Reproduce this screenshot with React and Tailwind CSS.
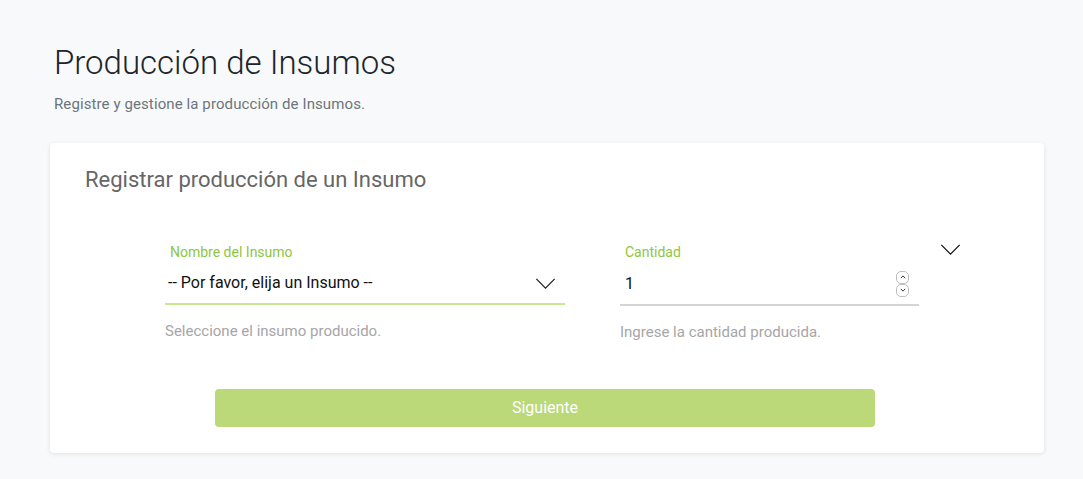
import React, { useState } from 'react';

const Chevron = ({ className }) => (
  <svg viewBox="0 0 22 12" className={className} fill="none" stroke="currentColor" strokeWidth="1.4">
    <path d="M1 1l10 10L21 1" />
  </svg>
);

const Spinner = () => (
  <div className="flex flex-col items-center gap-0">
    <div className="w-[13px] h-[13px] rounded-[5px] border border-[#bdbdbd] flex items-center justify-center">
      <svg viewBox="0 0 8 5" className="w-[6px] h-[4px]" fill="none" stroke="#333" strokeWidth="1.3">
        <path d="M1 4l3-3 3 3" />
      </svg>
    </div>
    <div className="w-[13px] h-[13px] rounded-[5px] border border-[#bdbdbd] flex items-center justify-center">
      <svg viewBox="0 0 8 5" className="w-[6px] h-[4px]" fill="none" stroke="#333" strokeWidth="1.3">
        <path d="M1 1l3 3 3-3" />
      </svg>
    </div>
  </div>
);

export default function App() {
  const [cantidad, setCantidad] = useState('1');

  return (
    <div className="min-h-screen bg-[#f8f9fa] pl-[50px] pr-[39px] pt-[40px] pb-[26px]" style={{ fontFamily: 'Roboto, sans-serif' }}>
      <div className="px-[4px]">
        <h1 className="text-[33px] leading-[46px] font-light text-[#212529]">
          Producción de Insumos
        </h1>
        <p className="mt-[8px] text-[15px] leading-[20px] tracking-[0.1px] text-[#6c757d]">
          Registre y gestione la producción de Insumos.
        </p>
      </div>

      <div className="mt-[29px] bg-white rounded-[4px] shadow-[0_1px_4px_rgba(0,0,0,0.1)] pt-[23px] pb-[26px]">
        <h2 className="pl-[35px] text-[22px] leading-[28px] text-[#666666]">
          Registrar producción de un Insumo
        </h2>

        <div className="mt-[49px] flex pl-[115px]">
          <div className="w-[400px]">
            <label className="block pl-[5px] text-[14px] leading-[18px] text-[#8dc63f]">Nombre del Insumo</label>
            <div className="mt-[2px] h-[42px] flex items-center justify-between pl-[3px] pr-[9px] border-b-2 border-[#c9e88d]">
              <span className="text-[16px] text-[#111]">-- Por favor, elija un Insumo --</span>
              <Chevron className="w-[21px] h-[11px] text-[#222]" />
            </div>
            <p className="mt-[17px] text-[15px] leading-[18px] text-[#a6a6a6]">Seleccione el insumo producido.</p>
          </div>

          <div className="ml-[55px] w-[299px]">
            <label className="block pl-[5px] text-[14px] leading-[18px] text-[#8dc63f]">Cantidad</label>
            <div className="mt-[2px] h-[42px] flex items-center justify-between pl-[5px] pr-[10px] border-b border-[#d4d4d4] shadow-[0_1px_0_#cfe88a]">
              <input
                type="text"
                value={cantidad}
                onChange={(e) => setCantidad(e.target.value)}
                className="w-[200px] text-[16px] text-[#111] outline-none bg-transparent"
              />
              <Spinner />
            </div>
            <p className="mt-[18px] text-[15px] leading-[18px] text-[#a6a6a6]">Ingrese la cantidad producida.</p>
          </div>

          <div className="ml-[21px] pt-[1px]">
            <Chevron className="w-[21px] h-[11px] text-[#111]" />
          </div>
        </div>

        <div className="mt-[48px] pl-[165px]">
          <button className="w-[660px] h-[38px] rounded-[4px] bg-[#bbd979] text-white text-[16px]">
            Siguiente
          </button>
        </div>
      </div>
    </div>
  );
}
